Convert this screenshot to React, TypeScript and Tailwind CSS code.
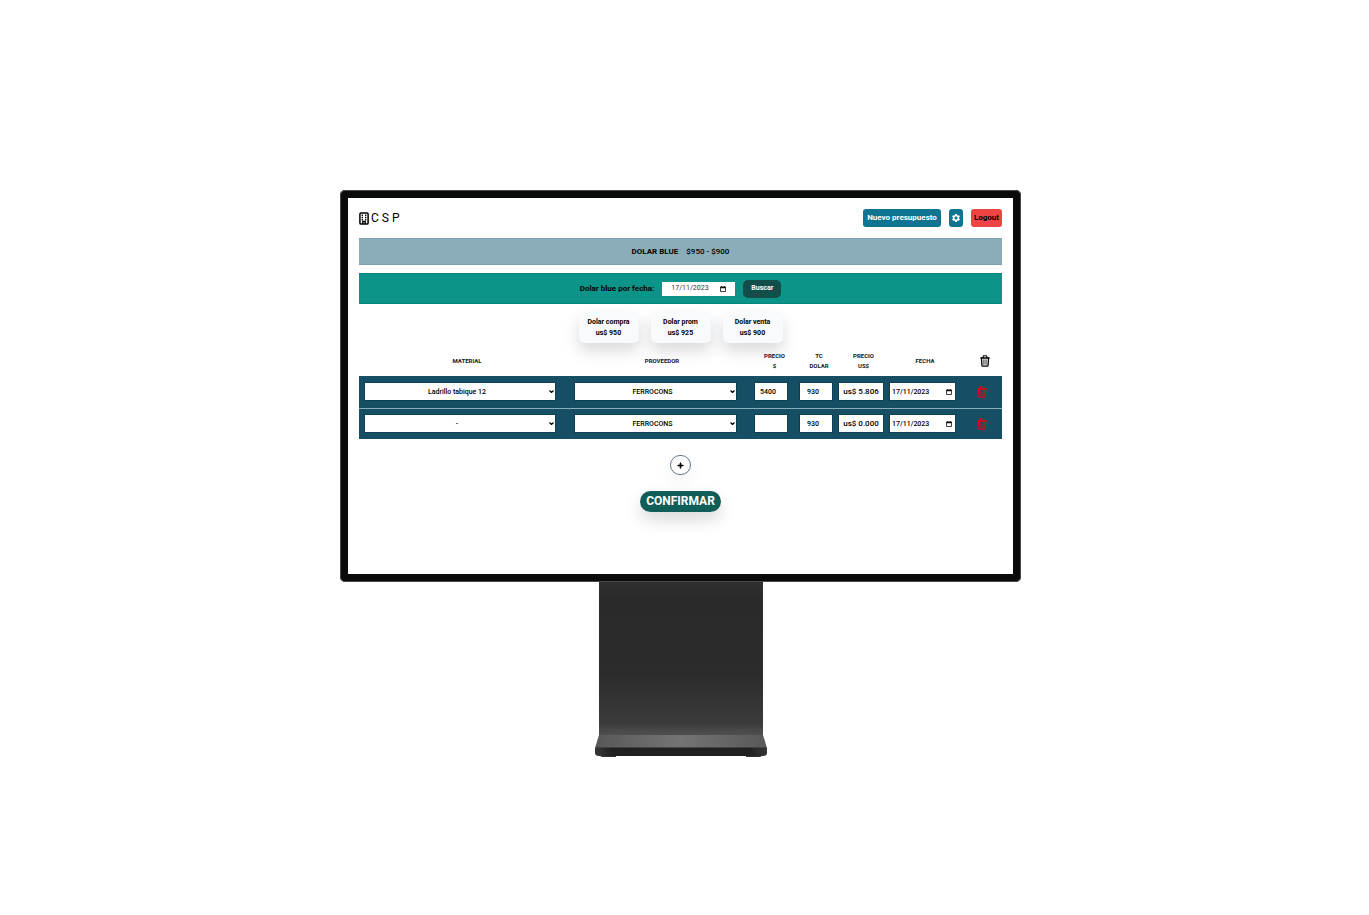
import type { ReactNode } from "react";
import { FaPlus } from "react-icons/fa6";
import { MdSettings } from "react-icons/md";

type Line = { material: string; proveedor: string; precio: string; tc: string; usd: string; fecha: string };

const lines: Line[] = [
  { material: "Ladrillo tabique 12", proveedor: "FERROCONS", precio: "5400", tc: "930", usd: "us$ 5.806", fecha: "17/11/2023" },
  { material: "-", proveedor: "FERROCONS", precio: "", tc: "930", usd: "us$ 0.000", fecha: "17/11/2023" },
];

const rates = [
  { label: "Dolar compra", value: "us$ 950" },
  { label: "Dolar prom", value: "us$ 925" },
  { label: "Dolar venta", value: "us$ 900" },
];

function CalendarIcon() {
  return (
    <svg viewBox="0 0 12 12" className="size-[6px] shrink-0" fill="none" stroke="#111" strokeWidth="1.6" aria-hidden="true">
      <path d="M1 2h10v9H1z" />
      <path d="M1 3h10" strokeWidth="3" />
      <path d="M3 0v2M9 0v2" />
    </svg>
  );
}

function BuildingIcon() {
  return (
    <svg viewBox="0 0 10 13" className="h-[13px] w-[10px]" fill="none" stroke="currentColor" aria-hidden="true">
      <rect x="0.9" y="0.9" width="8.2" height="11.2" rx="1.2" strokeWidth="1.5" />
      <path d="M3.3 2.500v6M6.700 2.500v6" strokeWidth="1.3" strokeDasharray="1.5 0.8" />
      <path d="M3.800 12V9.500h2.400V12" strokeWidth="1.3" />
    </svg>
  );
}

function TrashIcon() {
  return (
    <svg viewBox="0 0 10 12" className="mx-auto block h-3 w-[10px]" fill="none" stroke="currentColor" strokeLinejoin="round" strokeLinecap="round" aria-hidden="true">
      <path d="M3.200 2.600V1.400q0-.6.6-.6h2.400q.6 0 .6.6v1.200" strokeWidth="1.100" />
      <path d="M.8 3h8.400" strokeWidth="1.300" />
      <path d="M1.500 3.200l.4 7q.1 1 1 1h4.200q.9 0 1-1l.4-7" strokeWidth="1.300" />
      <path d="M3.700 4.800v4.600M5 4.800v4.600M6.300 4.800v4.600" strokeWidth="0.600" />
    </svg>
  );
}

function Select({ label, value }: { label: string; value: string }) {
  return (
    <div className="relative">
      <select
        aria-label={label}
        defaultValue={value}
        className="block h-[19px] w-full appearance-none border border-[#0d3f55] bg-white pr-[6px] text-center text-[7px] font-medium text-black [text-align-last:center]"
      >
        <option>{value}</option>
      </select>
      <svg viewBox="0 0 10 6" className="pointer-events-none absolute top-2 right-[2px] h-[3px] w-[5px]" fill="none" stroke="#000" strokeWidth="2.4" aria-hidden="true">
        <path d="M1 1l4 4 4-4" />
      </svg>
    </div>
  );
}

function Head({ children, padded = true }: { children: ReactNode; padded?: boolean }) {
  return <th className={padded ? "p-0 pl-[6px] font-bold" : "p-0 font-bold"}>{children}</th>;
}

const field = "block h-[19px] w-full min-w-0 border border-[#0d3f55] bg-white font-medium text-black";

function Stand() {
  return (
    <svg viewBox="0 0 174 176" className="block w-[174px]" aria-hidden="true">
      <defs>
        <linearGradient id="neck" x1="0" y1="0" x2="0" y2="1">
          <stop offset="0" stopColor="#303030" />
          <stop offset="0.12" stopColor="#2a2a2a" />
          <stop offset="0.6" stopColor="#2c2c2c" />
          <stop offset="0.92" stopColor="#3b3b3b" />
          <stop offset="0.96" stopColor="#484848" />
          <stop offset="1" stopColor="#505050" />
        </linearGradient>
        <linearGradient id="base" x1="0" y1="0" x2="1" y2="0">
          <stop offset="0" stopColor="#585858" />
          <stop offset="0.5" stopColor="#747474" />
          <stop offset="1" stopColor="#585858" />
        </linearGradient>
        <linearGradient id="foot" x1="0" y1="0" x2="1" y2="0">
          <stop offset="0" stopColor="#363636" />
          <stop offset="0.1" stopColor="#202020" />
          <stop offset="0.9" stopColor="#202020" />
          <stop offset="1" stopColor="#363636" />
        </linearGradient>
      </defs>
      <path d="M5 0H169V154H5z" fill="url(#neck)" />
      <path d="M5 153H169L173 166H1z" fill="url(#base)" />
      <path d="M1 165.500H173V171q0 3-4 3H5q-4 0-4-3z" fill="url(#foot)" />
      <path d="M6 174H22v1H8zM152 174H168l-2 1H152z" fill="#333" />
    </svg>
  );
}

export default function App() {
  return (
    <main className="flex min-h-screen flex-col items-center bg-white pt-[190px] pr-2 font-[Roboto,'Noto_Sans',sans-serif] text-black">
      <div className="w-full max-w-[681px] rounded-[5px] border-8 border-[#090a0a] bg-white px-[11px] pt-[11px] pb-[62px] outline-1 -outline-offset-1 outline-[#4a4a4a]">
        <header className="flex items-center justify-between">
          <a href="#" className="flex items-center gap-[2px] text-[12px] leading-[18px]">
            <BuildingIcon />
            <span>C S P</span>
          </a>
          <nav className="flex gap-2 text-[8px] font-bold">
            <button className="h-[18px] rounded-[3px] bg-[#0e7490] px-1 text-white">Nuevo presupuesto</button>
            <button aria-label="Ajustes" className="flex h-[18px] w-[14px] items-center justify-center rounded-[3px] bg-[#0e7490] text-white">
              <MdSettings className="size-[10px]" />
            </button>
            <button className="h-[18px] rounded-[3px] bg-[#ef4444] px-[3px] text-black">Logout</button>
          </nav>
        </header>

        <section className="mt-[11px] flex h-[27px] items-center justify-center gap-2 border-y border-[#7ba1ae] bg-[#8aadb9] text-[8px]">
          <strong className="font-bold">DOLAR BLUE</strong>
          <span className="font-medium">$950 - $900</span>
        </section>

        <form className="mt-2 flex h-[31px] items-center justify-center gap-2 border-y border-[#07877b] bg-[#0d9488] text-[8px]" onSubmit={(e) => e.preventDefault()}>
          <label htmlFor="fecha" className="font-bold">Dolar blue por fecha:</label>
          <div className="flex h-[14px] w-[73px] items-center bg-white pr-[9px] pl-[9px]">
            <input id="fecha" type="text" defaultValue="17/11/2023" className="w-full min-w-0 text-[7px] text-[#333] outline-none" />
            <CalendarIcon />
          </div>
          <button className="h-[18px] rounded-[5px] bg-[#134e4a] px-2 text-[7px] font-bold text-white">Buscar</button>
        </form>

        <div className="mt-2 flex justify-center gap-3 text-center text-[7px] leading-[11px] font-bold">
          {rates.map((r) => (
            <div key={r.label} className="h-[31px] w-[60px] rounded-[6px] bg-[#f8fafc] pt-[5px] shadow-[0_8px_16px_rgba(0,0,0,0.15)]">
              <p>{r.label}</p>
              <p>{r.value}</p>
            </div>
          ))}
        </div>

        <table className="relative mt-[2px] w-full table-fixed border-collapse">
          <colgroup>
            <col className="w-[210px]" />
            <col />
            <col className="w-[45px]" />
            <col className="w-[44px]" />
            <col className="w-[51px]" />
            <col className="w-[72px]" />
            <col className="w-[41px]" />
          </colgroup>
          <thead>
            <tr className="h-[31px] text-center text-[6px] leading-[10px] text-[#0f172a]">
              <Head>MATERIAL</Head>
              <Head>PROVEEDOR</Head>
              <Head>PRECIO<br />$</Head>
              <Head>TC<br />DOLAR</Head>
              <Head padded={false}>PRECIO<br />US$</Head>
              <Head padded={false}>FECHA</Head>
              <Head><span className="text-black"><TrashIcon /></span></Head>
            </tr>
          </thead>
          <tbody>
            {lines.map((l, i) => (
              <tr key={i} className="h-8 border-b border-[#8aadb9] bg-[#164e63] last:h-[31px] last:border-b-0">
                <td className="p-0 pr-[13px] pl-[5px]"><Select label="Material" value={l.material} /></td>
                <td className="p-0 pr-[12px] pl-[5px]"><Select label="Proveedor" value={l.proveedor} /></td>
                <td className="p-0 pr-[6px] pl-[5px]"><input aria-label="Precio $" defaultValue={l.precio} className={`${field} px-[5px] text-[7px]`} /></td>
                <td className="p-0 pr-[5px] pl-[5px]"><input aria-label="TC dolar" defaultValue={l.tc} className={`${field} px-[7px] text-[7px]`} /></td>
                <td className="p-0 pr-[5px]"><input aria-label="Precio us$" defaultValue={l.usd} className={`${field} text-center text-[8px]`} /></td>
                <td className="p-0 pr-[5px]">
                  <div className="flex h-[19px] items-center border border-[#0d3f55] bg-white pr-[3px] pl-[2px]">
                    <input aria-label="Fecha" type="text" defaultValue={l.fecha} className="w-full min-w-0 text-[7px] font-medium text-black outline-none" />
                    <CalendarIcon />
                  </div>
                </td>
                <td className="p-0 text-center">
                  <button aria-label="Eliminar" className="block w-full text-[#e30613]"><TrashIcon /></button>
                </td>
              </tr>
            ))}
          </tbody>
        </table>

        <div className="mt-4 flex flex-col items-center gap-4">
          <button aria-label="Agregar" className="flex h-5 w-[21px] items-center justify-center rounded-full border border-[#64748b] bg-white shadow-[0_8px_16px_rgba(0,0,0,0.06)]">
            <FaPlus className="size-[7px]" stroke="currentColor" strokeWidth="50" />
          </button>
          <button className="h-[21px] rounded-full bg-[#115e59] px-[6px] text-[12px] leading-[21px] font-bold text-white shadow-[0_8px_16px_rgba(0,0,0,0.15)]">CONFIRMAR</button>
        </div>
      </div>
      <Stand />
    </main>
  );
}
